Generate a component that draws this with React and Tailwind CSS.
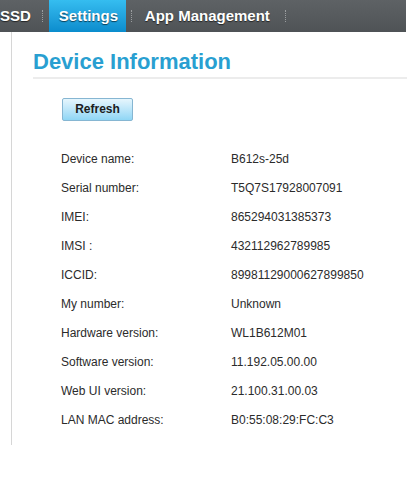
const rows = [
  ['Device name:', 'B612s-25d'],
  ['Serial number:', 'T5Q7S17928007091'],
  ['IMEI:', '865294031385373'],
  ['IMSI :', '432112962789985'],
  ['ICCID:', '89981129000627899850'],
  ['My number:', 'Unknown'],
  ['Hardware version:', 'WL1B612M01'],
  ['Software version:', '11.192.05.00.00'],
  ['Web UI version:', '21.100.31.00.03'],
  ['LAN MAC address:', 'B0:55:08:29:FC:C3'],
];

function Sep() {
  return <span className="w-px h-[12px] border-l border-dotted border-[#9a9d9f]" />;
}

export default function App() {
  return (
    <div className="w-[418px] h-[480px] bg-white font-['Liberation_Sans',Arial,sans-serif] overflow-hidden">
      {/* top menu */}
      <div className="w-[406px] h-[32px] flex items-center bg-gradient-to-b from-[#5e6265] to-[#4f5356] text-white font-bold text-[15px] [text-shadow:0_1px_1px_rgba(0,0,0,0.6)]">
        <span className="pr-[11px]">SSD</span>
        <Sep />
        <span className="ml-[6px] h-full flex items-center px-[10px] w-[77px] bg-gradient-to-b from-[#35bdf0] to-[#0a8ccd]">Settings</span>
        <span className="ml-[5px] flex"><Sep /></span>
        <span className="ml-[13px] pr-[15px]">App Management</span>
        <Sep />
      </div>

      {/* content */}
      <div className="ml-[11px] h-[413px] border-l border-[#d6d6d6] pl-[21px]">
        <div className="w-[374px] border-b-2 border-[#ececec] pt-[16px] pb-[1px]">
          <h1 className="text-[22px] leading-[28px] font-bold text-[#299fd1]">Device Information</h1>
        </div>
        <div className="pl-[29px] pt-[17px]">
          <button className="w-[71px] h-[23px] rounded-[2px] border border-[#86b6d2] bg-gradient-to-b from-[#e6f6fd] to-[#8fd6f5] text-[12px] font-bold text-[#1c1c1c]">
            Refresh
          </button>
        </div>
        <div className="pl-[28px] pt-[24px] text-[12px] text-[#2b2b2b]">
          {rows.map(([label, value]) => (
            <div key={label} className="flex h-[29px] items-center">
              <span className="w-[170px]">{label}</span>
              <span>{value}</span>
            </div>
          ))}
        </div>
      </div>
    </div>
  );
}
